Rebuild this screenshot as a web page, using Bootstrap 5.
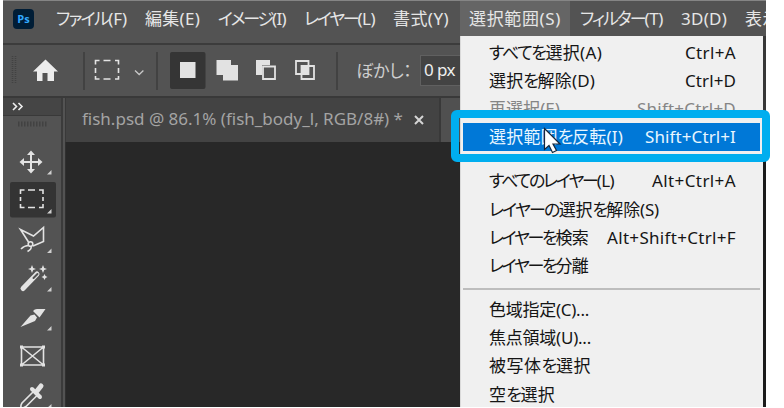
<!DOCTYPE html>
<html lang="ja">
<head>
<meta charset="utf-8">
<meta name="viewport" content="width=device-width, initial-scale=1">
<title>Photoshop</title>
<link href="https://cdn.jsdelivr.net/npm/bootstrap@5.3.0/dist/css/bootstrap.min.css" rel="stylesheet">
<style>
body{background:#fff;font-family:"Noto Sans","Noto Sans CJK JP",sans-serif;font-size:17px;line-height:1;font-feature-settings:"palt";overflow:hidden}
.ps-app{width:763px;height:407px;margin-left:3px;background:#535353;color:#e6e6e6}
.ps-menubar{height:43px;border-top:1px solid #858585;flex:none}
.ps-menubar > *{flex:none}
.ps-logo{width:21px;height:20px;margin:8px 0 0 10px;background:#001d36;border-radius:4px;color:#31a8ff;font:bold 11px/19px "Open Sans",sans-serif}
.ps-menubar .fit{line-height:35px;height:35px}
.ps-m1{margin-left:22px}.ps-m2{margin-left:18px}.ps-m3{margin-left:10px}
.ps-open{margin-left:11px;width:110px;height:35px;background:#656565;padding-left:9px}
.ps-options{height:55px;border-top:2px solid #3c3c3c;border-bottom:2px solid #393939;flex:none}
.fit{display:inline-block;white-space:nowrap}
.ps-tools{width:60px;flex:none;border-right:2px solid #3b3b3b}
.ps-toolhead{height:18px;background:#454545;border-bottom:1px solid #393939}
.ps-tabs{height:44px;background:#505050;margin-left:2px}
.ps-tab{width:376px;background:#434343;color:#a4a4a4;padding:0 0 3px 16px;border-right:2px solid #393939;border-left:1px solid #393939}
.ps-close{margin-left:11px;margin-top:3px}
.ps-canvas{background:#282828;margin-left:2px;border-left:1px solid #303030}
.ps-row{height:50px}
.ps-label{color:#cecece;margin-left:-2px}
.ps-field{width:60px;height:31px;margin-left:7px;background:#434343;border:1px solid #606060;line-height:27px;padding-left:3px;color:#eee}
.ps-drop{left:460px;top:36px;width:303px;height:371px;background:#f0f0f0;color:#151515;z-index:5;border-left:1px solid #dadada;padding-top:2px}
.ps-shadow{left:763px;top:36px;width:3px;height:371px;background:linear-gradient(#383838 0 107px,#1b1b1b 107px);z-index:4}
.ps-item{height:28.2px;flex:none;padding:0 27px 0 28px}
.ps-off{color:#858585}
.ps-picked{background:#0078d7;color:#e8f6ff;margin:0 3px 0 2px;padding:0 24px 0 26px}
.ps-rule{height:2px;flex:none;background:#bdbdbd;margin:8px 3px 6px 2px}
.ps-frame{left:451px;top:110px;width:319px;height:52px;border:8px solid #00aeef;border-radius:6px;z-index:6}
.ps-pointer{left:542px;top:127px;z-index:8}
.ps-more{left:12px;top:102px}
svg{display:block;flex:none}
</style>
<script src="https://cdn.jsdelivr.net/npm/bootstrap@5.3.0/dist/js/bootstrap.bundle.min.js"></script>
</head>
<body class="position-relative">
<div class="ps-app d-flex flex-column overflow-hidden">
  <nav class="ps-menubar d-flex overflow-hidden">
    <div class="ps-logo text-center">Ps</div>
    <span class="fit ps-m1" data-w="71">ファイル(F)</span>
    <span class="fit ps-m2" data-w="55">編集(E)</span>
    <span class="fit ps-m2" data-w="68">イメージ(I)</span>
    <span class="fit ps-m2" data-w="71">レイヤー(L)</span>
    <span class="fit ps-m2" data-w="56">書式(Y)</span>
    <div class="ps-open"><span class="fit" data-w="92">選択範囲(S)</span></div>
    <span class="fit ps-m3" data-w="83">フィルター(T)</span>
    <span class="fit ps-m2" data-w="46">3D(D)</span>
    <span class="fit ps-m2" data-w="35">表示</span>
  </nav>
  <div class="ps-options">
    <svg width="355" height="51" viewBox="3 45 355 51" class="float-start">
      <path d="M12.500 56v28M15.500 56v28" stroke="#424242" stroke-width="1.500" stroke-dasharray="1 1"/>
      <path d="M84 52v38M157 52v38M337 52v38" stroke="#3e3e3e" stroke-width="1.500"/>
      <path d="M45.500 59.500 33 71.500h4V81h5.500v-8h5v8H54v-9.500h4z" fill="#ececec"/>
      <path d="M95.500 64.500v-4h4M103.500 60.500h7M115 60.500h3.500v4M118.500 68v5M118.500 76v3H115M110.500 79h-7M99.500 79h-4v-3M95.500 73v-5" fill="none" stroke="#e4e4e4" stroke-width="1.600"/>
      <path d="m135 70.500 4.200 4 4.200-4" fill="none" stroke="#c8c8c8" stroke-width="1.300"/>
      <rect x="170" y="52" width="35.500" height="37" rx="2" fill="#353535"/>
      <path d="M180 62h15.500v16H180zM216.500 60H231v5h7v15.500h-15V75h-6.500z" fill="#e2e2e2"/>
      <path d="M256 60h14v5h-8v10h-6z" fill="#e2e2e2"/><path d="M263 66.500h12V79h-12z" fill="none" stroke="#e2e2e2" stroke-width="1.800"/>
      <path d="M296 61h12.500v13H296zM301.500 66h12.500v13h-12.500z" fill="none" stroke="#e2e2e2" stroke-width="1.800"/><path d="M301.500 66h7v8h-7z" fill="#e2e2e2"/>
    </svg>
    <div class="ps-row d-flex align-items-center">
      <span class="fit ps-label" data-w="57">ぼかし：</span>
      <div class="ps-field"><span class="fit" data-w="31">0 px</span></div>
    </div>
  </div>
  <div class="d-flex flex-grow-1">
    <div class="ps-tools">
      <div class="ps-toolhead"></div>
      <svg width="57" height="292" viewBox="3 116 57 292">
        <path d="M18 124h29" stroke="#424242" stroke-width="5" stroke-dasharray="1.500 1.500"/>
        <rect x="10" y="182" width="46" height="35.500" rx="2" fill="#343434"/>
        <g fill="#e3e3e3"><path d="m31 150.500 4 4.500h-3v6h6v-3l4.500 4-4.500 4v-3h-6v6h3l-4 4.500-4-4.500h3v-6h-6v3l-4.500-4 4.500-4v3h6v-6h-3z"/>
        <path d="m51.500 170v4.500H47zM51.500 209v4.500H47zM51.500 248.500v4.500H47zM51.500 287v4.500H47zM51.500 326v4.500H47zM51.500 404v4H47z" fill="#d0d0d0"/>
        <path d="M33 311q1.500-2 4-2h8.500l-6 8.500-2-2zM20.500 327l10-11.500 4-1 2.500 3-2 3.500z"/>
        <path d="m32 265 1.200 3 2.800 1-2.800 1-1.200 3-1.200-3-2.800-1 2.800-1zM43 265l1.200 3 2.800 1-2.800 1-1.200 3-1.200-3-2.800-1 2.800-1zM44.500 274l1 2 2 1-2 1-1 2-1-2-2-1 2-1z"/></g>
        <g fill="none" stroke="#e3e3e3" stroke-width="1.600">
          <path d="M20.500 194v-4h4M28 190h7M39 190h4v4M43 197v4M43 204v3.500h-4M35 207.500h-7M24.500 207.500h-4V204M20.500 201v-4"/>
          <path d="m28.500 242-8-12.500L33.500 236l10-8.500v14L33 246M28.500 245.500q-4 0-7.500 3.500M31 246.500q1 2.500-3.500 5"/><circle cx="30.500" cy="244" r="2.300"/>
          <path d="m23 288.500 14-14.500" stroke-width="5" stroke-linecap="round"/><path d="m33.500 278 4-4" stroke="#535353" stroke-width="2" stroke-linecap="round"/>
          <path d="M21.500 347h22v18h-22zM21.500 347l22 18M43.500 347l-22 18"/>
          <path d="m33 392-11 11q-2 3.500-.5 4.500t4.500-1l11-11"/><path d="m32 389 8 8" stroke-width="4" stroke-linecap="round"/><path d="m37 391 4-5" stroke-width="5" stroke-linecap="round"/>
        </g>
        <path d="M20 345.500h3v3h-3zM42 345.500h3v3h-3zM20 363.500h3v3h-3zM42 363.500h3v3h-3z" fill="#e3e3e3"/>
      </svg>
    </div>
    <div class="flex-grow-1 d-flex flex-column">
      <div class="ps-tabs d-flex">
        <div class="ps-tab d-flex align-items-center">
          <span class="fit" data-w="321">fish.psd @ 86.1% (fish_body_l, RGB/8#) *</span>
          <svg class="ps-close" width="10" height="10" viewBox="0 0 10 10"><path d="m1 1 8 8M9 1 1 9" stroke="#d5d5d5" stroke-width="2"/></svg>
        </div>
      </div>
      <div class="ps-canvas flex-grow-1"></div>
    </div>
  </div>
</div>
<svg class="ps-more position-absolute" width="12" height="9" viewBox="0 0 12 9"><path d="m1 1 3.500 3.500L1 8M6.500 1 10 4.500 6.500 8" fill="none" stroke="#eee" stroke-width="1.600"/></svg>
<div class="ps-shadow position-absolute"></div>
<div class="ps-drop position-absolute d-flex flex-column overflow-hidden">
  <div class="ps-item d-flex justify-content-between align-items-center"><span class="fit" data-w="113">すべてを選択(A)</span><span class="fit" data-w="51">Ctrl+A</span></div>
  <div class="ps-item d-flex justify-content-between align-items-center"><span class="fit" data-w="106">選択を解除(D)</span><span class="fit" data-w="51">Ctrl+D</span></div>
  <div class="ps-item ps-off d-flex justify-content-between align-items-center"><span class="fit" data-w="71">再選択(E)</span><span class="fit" data-w="99">Shift+Ctrl+D</span></div>
  <div class="ps-item ps-picked d-flex justify-content-between align-items-center"><span class="fit" data-w="134">選択範囲を反転(I)</span><span class="fit" data-w="91">Shift+Ctrl+I</span></div>
  <div class="pt-3"></div>
  <div class="ps-item d-flex justify-content-between align-items-center"><span class="fit" data-w="125">すべてのレイヤー(L)</span><span class="fit" data-w="84">Alt+Ctrl+A</span></div>
  <div class="ps-item d-flex justify-content-between align-items-center"><span class="fit" data-w="170">レイヤーの選択を解除(S)</span></div>
  <div class="ps-item d-flex justify-content-between align-items-center"><span class="fit" data-w="99">レイヤーを検索</span><span class="fit" data-w="129">Alt+Shift+Ctrl+F</span></div>
  <div class="ps-item d-flex justify-content-between align-items-center"><span class="fit" data-w="99">レイヤーを分離</span></div>
  <div class="ps-rule"></div>
  <div class="ps-item d-flex align-items-center"><span class="fit" data-w="100">色域指定(C)...</span></div>
  <div class="ps-item d-flex align-items-center"><span class="fit" data-w="102">焦点領域(U)...</span></div>
  <div class="ps-item d-flex align-items-center"><span class="fit" data-w="102">被写体を選択</span></div>
  <div class="ps-item d-flex align-items-center"><span class="fit" data-w="66">空を選択</span></div>
</div>
<div class="ps-frame position-absolute"></div>
<svg class="ps-pointer position-absolute" width="20" height="28" viewBox="0 0 20 28"><path d="M2.500 1.500v21l4.500-4 3.500 7 4-2-3.500-6.500h7z" fill="#fff" stroke="#15273c" stroke-width="1.200"/></svg>
<script>
// Tighten kana runs and space each label to its set width
document.querySelectorAll('.fit').forEach(function (el) {
  var text = el.textContent, w = +el.dataset.w;
  var kana = (text.match(/[\u3040-\u30ff]/g) || []).length;
  var gap = (w - el.getBoundingClientRect().width + kana * 1.6) / text.length;
  el.innerHTML = text.replace(/[\u3040-\u30ff]+/g, '<span class="kana">$&</span>');
  el.style.letterSpacing = gap + 'px';
  el.querySelectorAll('.kana').forEach(function (k) { k.style.letterSpacing = (gap - 1.6) + 'px'; });
  el.style.width = w + 'px';
});
</script>
</body>
</html>
